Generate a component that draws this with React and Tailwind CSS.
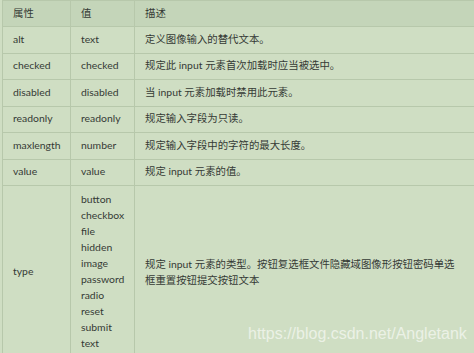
const rows = [
  { attr: 'alt', value: 'text', desc: '定义图像输入的替代文本。' },
  { attr: 'checked', value: 'checked', desc: '规定此 input 元素首次加载时应当被选中。' },
  { attr: 'disabled', value: 'disabled', desc: '当 input 元素加载时禁用此元素。' },
  { attr: 'readonly', value: 'readonly', desc: '规定输入字段为只读。' },
  { attr: 'maxlength', value: 'number', desc: '规定输入字段中的字符的最大长度。' },
  { attr: 'value', value: 'value', desc: '规定 input 元素的值。' },
]

const types = ['button', 'checkbox', 'file', 'hidden', 'image', 'password', 'radio', 'reset', 'submit', 'text']

const cell = 'border-r border-b border-[#b7c8ab] px-[10px] flex items-center'

const App = () => {
  return (
    <div
      className="relative w-[474px] h-[353px] overflow-hidden bg-[#cfdec3] pl-[2px] text-[10.4px] text-[#353a35]"
      style={{ fontFamily: 'Lato, "Noto Sans CJK SC", sans-serif' }}
    >
      <div className="w-[500px] grid grid-cols-[68px_64px_1fr] border-l border-t border-[#b7c8ab]">
        <div className={`${cell} h-[26px] bg-[#c4d5b9]`}>属性</div>
        <div className={`${cell} h-[26px] bg-[#c4d5b9]`}>值</div>
        <div className={`${cell} h-[26px] bg-[#c4d5b9]`}>描述</div>

        {rows.map((r) => (
          <div key={r.attr} className="contents">
            <div className={`${cell} h-[26.5px]`}>{r.attr}</div>
            <div className={`${cell} h-[26.5px]`}>{r.value}</div>
            <div className={`${cell} h-[26.5px]`}>{r.desc}</div>
          </div>
        ))}

        <div className={cell}>type</div>
        <div className="border-r border-b border-[#b7c8ab] px-[10px] pt-[5px] pb-[6px] leading-[16px]">
          {types.map((t) => (
            <div key={t}>{t}</div>
          ))}
        </div>
        <div className={`${cell} leading-[16px]`}>
          <div>
            <div>规定 input 元素的类型。按钮复选框文件隐藏域图像形按钮密码单选</div>
            <div>框重置按钮提交按钮文本</div>
          </div>
        </div>
      </div>

      <div
        className="absolute left-[248px] top-[322px] text-[16px] text-white/60 whitespace-nowrap"
        style={{ fontFamily: '"Liberation Sans", Arial, sans-serif' }}
      >
        https://blog.csdn.net/Angletank
      </div>
    </div>
  )
}

export default App
